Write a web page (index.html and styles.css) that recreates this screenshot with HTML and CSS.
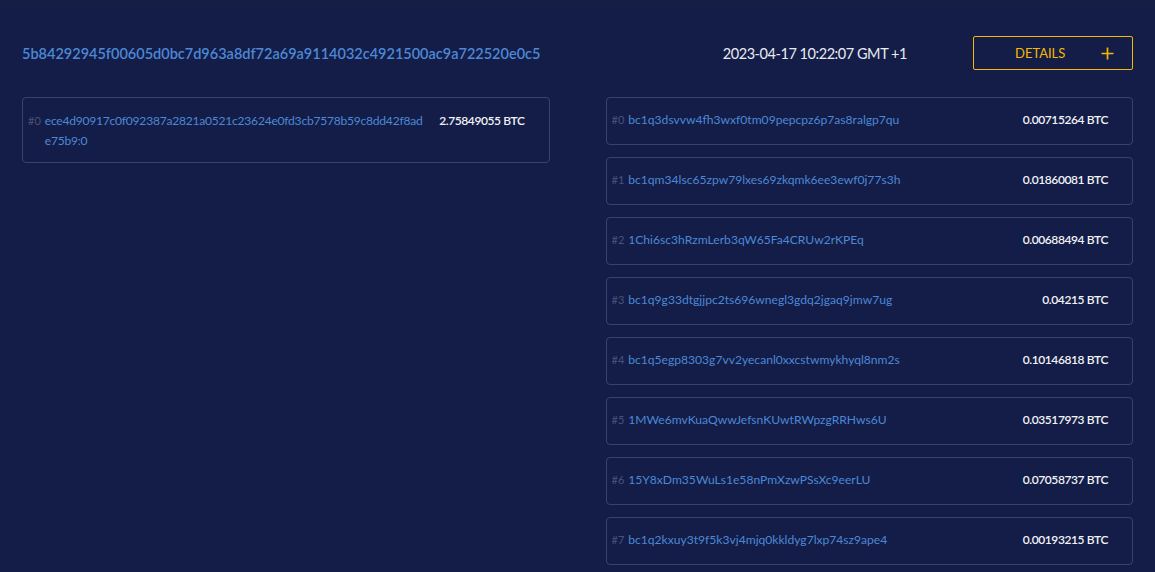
FILE: index.html
```html
<!DOCTYPE html>
<html>
<head>
<meta charset="utf-8">
<link rel="stylesheet" href="styles.css">
</head>
<body>
<div class="topband"></div>
<div class="page">
  <div class="header">
    <a class="txid">5b84292945f00605d0bc7d963a8df72a69a9114032c4921500ac9a722520e0c5</a>
    <div class="time">2023-04-17 10:22:07 GMT +1</div>
    <button class="details"><span>DETAILS</span><svg class="plus" width="13" height="13" viewBox="0 0 13 13"><path d="M6.5 0.5v12M0.5 6.5h12" stroke="#f5b800" stroke-width="1.7" fill="none"/></svg></button>
  </div>
  <div class="io">
    <div class="col">
      <div class="row in">
        <span class="idx">#0</span>
        <a class="addr">ece4d90917c0f092387a2821a0521c23624e0fd3cb7578b59c8dd42f8ad<wbr>e75b9:0</a>
        <span class="amt">2.75849055 BTC</span>
      </div>
    </div>
    <div class="col">
      <div class="row"><span class="idx">#0</span><a class="addr">bc1q3dsvvw4fh3wxf0tm09pepcpz6p7as8ralgp7qu</a><span class="amt">0.00715264 BTC</span></div>
      <div class="row"><span class="idx">#1</span><a class="addr">bc1qm34lsc65zpw79lxes69zkqmk6ee3ewf0j77s3h</a><span class="amt">0.01860081 BTC</span></div>
      <div class="row"><span class="idx">#2</span><a class="addr">1Chi6sc3hRzmLerb3qW65Fa4CRUw2rKPEq</a><span class="amt">0.00688494 BTC</span></div>
      <div class="row"><span class="idx">#3</span><a class="addr">bc1q9g33dtgjjpc2ts696wnegl3gdq2jgaq9jmw7ug</a><span class="amt">0.04215 BTC</span></div>
      <div class="row"><span class="idx">#4</span><a class="addr">bc1q5egp8303g7vv2yecanl0xxcstwmykhyql8nm2s</a><span class="amt">0.10146818 BTC</span></div>
      <div class="row"><span class="idx">#5</span><a class="addr">1MWe6mvKuaQwwJefsnKUwtRWpzgRRHws6U</a><span class="amt">0.03517973 BTC</span></div>
      <div class="row"><span class="idx">#6</span><a class="addr">15Y8xDm35WuLs1e58nPmXzwPSsXc9eerLU</a><span class="amt">0.07058737 BTC</span></div>
      <div class="row"><span class="idx">#7</span><a class="addr">bc1q2kxuy3t9f5k3vj4mjq0kkldyg7lxp74sz9ape4</a><span class="amt">0.00193215 BTC</span></div>
    </div>
  </div>
</div>
</body>
</html>
```
FILE: styles.css
```css
html, body {
  margin: 0;
  padding: 0;
  background: #131d47;
  font-family: "Lato", "Liberation Sans", sans-serif;
  overflow: hidden;
}
.topband {
  height: 8px;
  background: #151f45;
}
.page {
  width: 1111px;
  padding-left: 22px;
}
.header {
  display: flex;
  align-items: center;
  height: 34px;
  margin-top: 28px;
}
.txid {
  color: #4d88d6;
  font-size: 14.5px;
  font-weight: 600;
  flex: 1;
}
.time {
  color: #e9ebf2;
  font-size: 14.5px;
  letter-spacing: -0.45px;
  margin-right: 66px;
}
.details {
  width: 160px;
  height: 34px;
  box-sizing: border-box;
  border: 1px solid #f5b800;
  border-radius: 2px;
  background: transparent;
  color: #f5b800;
  font-family: inherit;
  font-size: 13px;
  display: flex;
  align-items: center;
  padding: 0 18px 0 41px;
  justify-content: space-between;
}
.plus {
  display: block;
}
.io {
  display: grid;
  grid-template-columns: 1fr 1fr;
  column-gap: 56px;
  margin-top: 27px;
}
.col {
  display: flex;
  flex-direction: column;
  gap: 12px;
}
.row {
  display: flex;
  align-items: center;
  height: 48px;
  box-sizing: border-box;
  border: 1px solid #394268;
  border-radius: 4px;
  padding: 0 24px 2px 5px;
  font-size: 12.1px;
  line-height: 20px;
}
.row.in {
  height: 66px;
  align-items: flex-start;
  padding-top: 13px;
}
.idx {
  color: #4a5277;
  font-size: 11px;
  margin-right: 4px;
}
.addr {
  color: #4d88d6;
  flex: 1;
}
.row.in .addr {
  flex: 0 0 385px;
  letter-spacing: -0.25px;
}
.amt {
  color: #f2f3f7;
  font-weight: 600;
  font-size: 12px;
  letter-spacing: -0.4px;
  margin-left: auto;
  white-space: nowrap;
}
```
